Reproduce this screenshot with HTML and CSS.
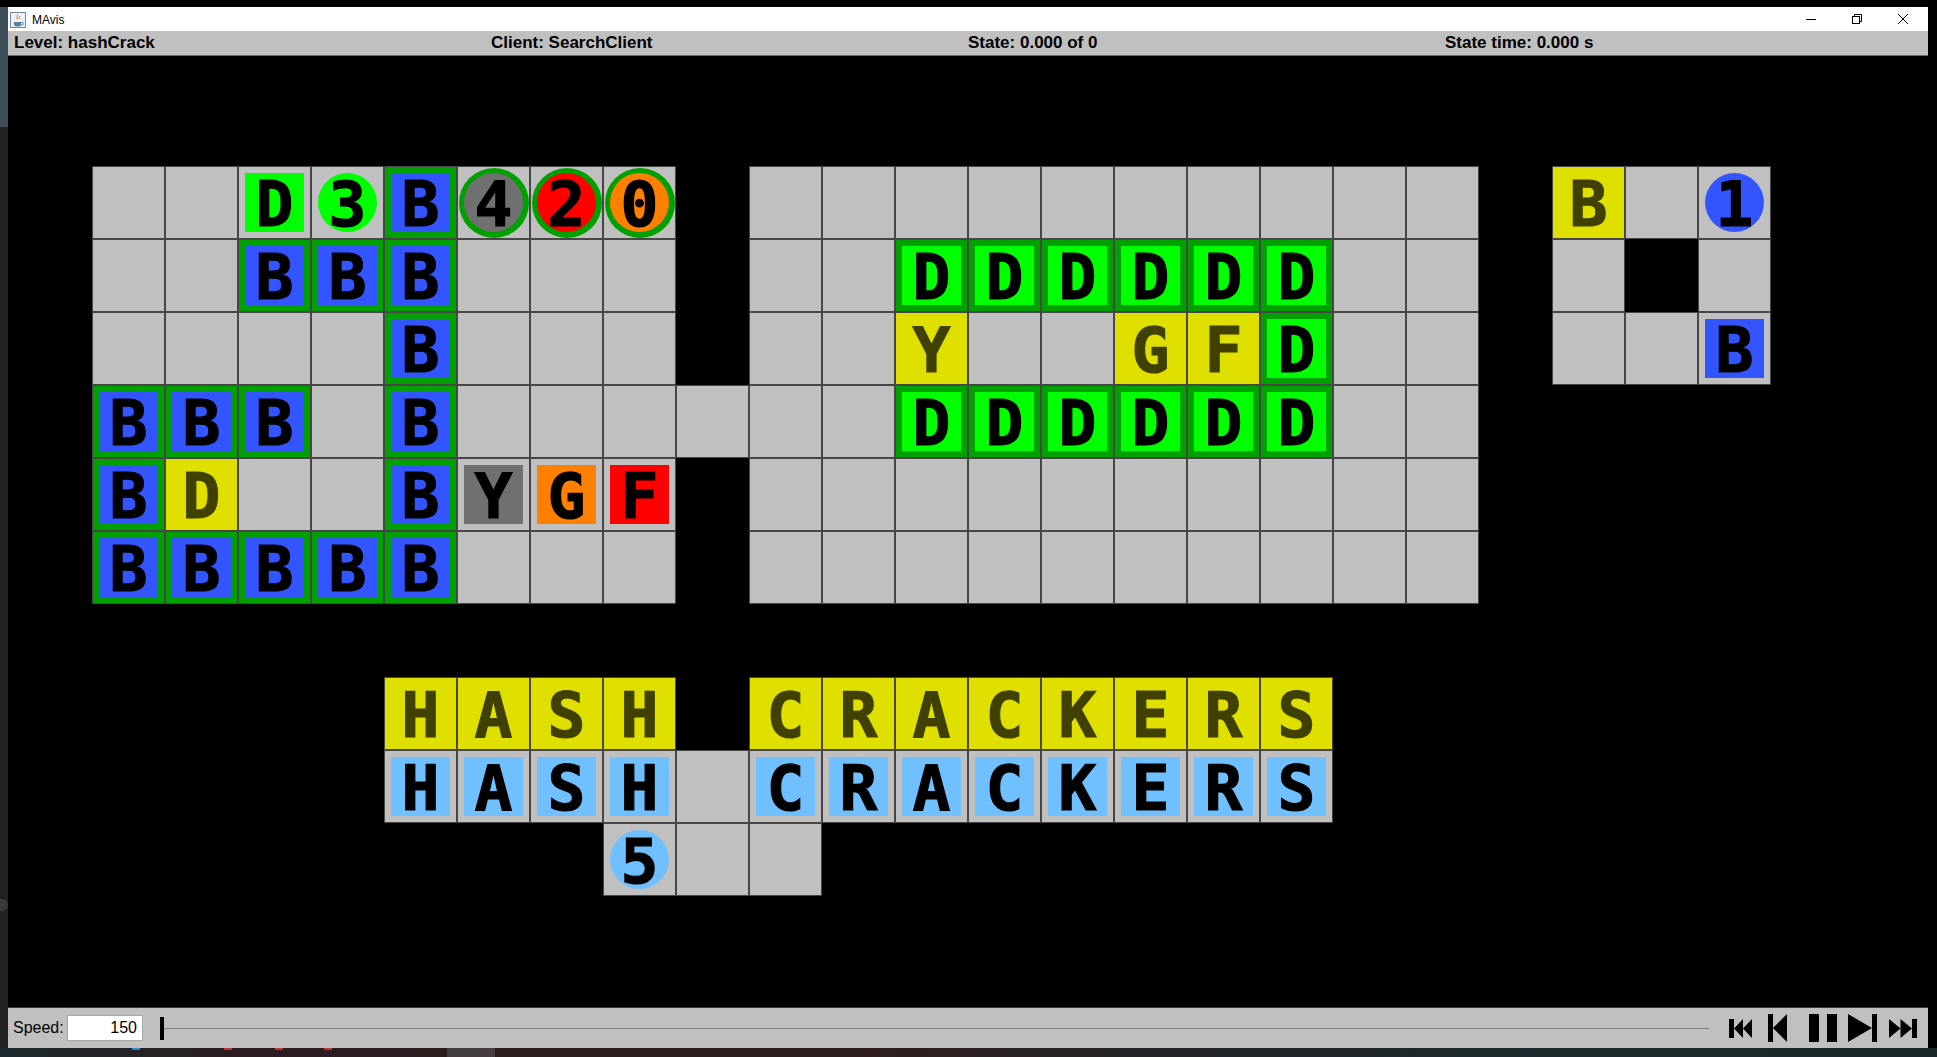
FILE: index.html
```html
<!DOCTYPE html>
<html>
<head>
<meta charset="utf-8">
<title>MAvis</title>
<link rel="stylesheet" href="styles.css">
</head>
<body>
<div class="top-gap"></div>
<div class="middle">
  <div class="desk-left"><span class="desk-dot"></span></div>
  <div class="window">
    <div class="titlebar">
      <svg class="app-icon" width="16" height="16" viewBox="0 0 16 16"><rect x="0.5" y="0.5" width="15" height="15" fill="#eef2f7" stroke="#6d8aa8"/><path d="M4 10h7v2a2.5 2.5 0 0 1-2.5 2.5h-2A2.5 2.5 0 0 1 4 12z" fill="#5382a1"/><path d="M11 10.5h1.2a1.2 1.2 0 0 1 0 2.4H11" fill="none" stroke="#5382a1"/><path d="M7 2.5c1.6 1.6-1.2 2.6.4 4.8M9.2 3.8c1 1-.6 2 .4 3.2" fill="none" stroke="#e76f00"/></svg>
      <span class="app-title">MAvis</span>
      <div class="win-btns">
        <span class="win-btn"><svg width="10" height="10" viewBox="0 0 10 10"><path d="M0 5.5h10" stroke="#000"/></svg></span>
        <span class="win-btn"><svg width="10" height="10" viewBox="0 0 10 10"><rect x="0.5" y="2.5" width="7" height="7" fill="none" stroke="#000"/><path d="M2.5 2.5V0.5h7v7h-2" fill="none" stroke="#000"/></svg></span>
        <span class="win-btn"><svg width="10" height="10" viewBox="0 0 10 10"><path d="M0 0L10 10M10 0L0 10" stroke="#000"/></svg></span>
      </div>
    </div>
    <div class="status">
      <span>Level: hashCrack</span>
      <span>Client: SearchClient</span>
      <span>State: 0.000 of 0</span>
      <span>State time: 0.000 s</span>
    </div>
    <div class="canvas">
      <div class="board">
        <!-- row 0 -->
        <div class="c"></div><div class="c"></div>
        <div class="c"><b class="box lime">D</b></div>
        <div class="c"><b class="agent lime">3</b></div>
        <div class="c ok"><b class="box blue">B</b></div>
        <div class="c"><span class="ring"><b class="agent grey">4</b></span></div>
        <div class="c"><span class="ring"><b class="agent red">2</b></span></div>
        <div class="c"><span class="ring"><b class="agent orange">0</b></span></div>
        <div class="w"></div>
        <div class="c"></div><div class="c"></div><div class="c"></div><div class="c"></div><div class="c"></div>
        <div class="c"></div><div class="c"></div><div class="c"></div><div class="c"></div><div class="c"></div>
        <div class="w"></div>
        <div class="c goal">B</div>
        <div class="c"></div>
        <div class="c"><b class="agent blue">1</b></div>
        <!-- row 1 -->
        <div class="c"></div><div class="c"></div>
        <div class="c ok"><b class="box blue">B</b></div>
        <div class="c ok"><b class="box blue">B</b></div>
        <div class="c ok"><b class="box blue">B</b></div>
        <div class="c"></div><div class="c"></div><div class="c"></div>
        <div class="w"></div>
        <div class="c"></div><div class="c"></div>
        <div class="c ok"><b class="box lime">D</b></div>
        <div class="c ok"><b class="box lime">D</b></div>
        <div class="c ok"><b class="box lime">D</b></div>
        <div class="c ok"><b class="box lime">D</b></div>
        <div class="c ok"><b class="box lime">D</b></div>
        <div class="c ok"><b class="box lime">D</b></div>
        <div class="c"></div><div class="c"></div>
        <div class="w"></div>
        <div class="c"></div><div class="w"></div><div class="c"></div>
        <!-- row 2 -->
        <div class="c"></div><div class="c"></div><div class="c"></div><div class="c"></div>
        <div class="c ok"><b class="box blue">B</b></div>
        <div class="c"></div><div class="c"></div><div class="c"></div>
        <div class="w"></div>
        <div class="c"></div><div class="c"></div>
        <div class="c goal">Y</div>
        <div class="c"></div><div class="c"></div>
        <div class="c goal">G</div>
        <div class="c goal">F</div>
        <div class="c ok"><b class="box lime">D</b></div>
        <div class="c"></div><div class="c"></div>
        <div class="w"></div>
        <div class="c"></div><div class="c"></div>
        <div class="c"><b class="box blue">B</b></div>
        <!-- row 3 -->
        <div class="c ok"><b class="box blue">B</b></div>
        <div class="c ok"><b class="box blue">B</b></div>
        <div class="c ok"><b class="box blue">B</b></div>
        <div class="c"></div>
        <div class="c ok"><b class="box blue">B</b></div>
        <div class="c"></div><div class="c"></div><div class="c"></div>
        <div class="c"></div>
        <div class="c"></div><div class="c"></div>
        <div class="c ok"><b class="box lime">D</b></div>
        <div class="c ok"><b class="box lime">D</b></div>
        <div class="c ok"><b class="box lime">D</b></div>
        <div class="c ok"><b class="box lime">D</b></div>
        <div class="c ok"><b class="box lime">D</b></div>
        <div class="c ok"><b class="box lime">D</b></div>
        <div class="c"></div><div class="c"></div>
        <div class="w"></div><div class="w"></div><div class="w"></div><div class="w"></div>
        <!-- row 4 -->
        <div class="c ok"><b class="box blue">B</b></div>
        <div class="c goal">D</div>
        <div class="c"></div><div class="c"></div>
        <div class="c ok"><b class="box blue">B</b></div>
        <div class="c"><b class="box grey">Y</b></div>
        <div class="c"><b class="box orange">G</b></div>
        <div class="c"><b class="box red">F</b></div>
        <div class="w"></div>
        <div class="c"></div><div class="c"></div><div class="c"></div><div class="c"></div><div class="c"></div>
        <div class="c"></div><div class="c"></div><div class="c"></div><div class="c"></div><div class="c"></div>
        <div class="w"></div><div class="w"></div><div class="w"></div><div class="w"></div>
        <!-- row 5 -->
        <div class="c ok"><b class="box blue">B</b></div>
        <div class="c ok"><b class="box blue">B</b></div>
        <div class="c ok"><b class="box blue">B</b></div>
        <div class="c ok"><b class="box blue">B</b></div>
        <div class="c ok"><b class="box blue">B</b></div>
        <div class="c"></div><div class="c"></div><div class="c"></div>
        <div class="w"></div>
        <div class="c"></div><div class="c"></div><div class="c"></div><div class="c"></div><div class="c"></div>
        <div class="c"></div><div class="c"></div><div class="c"></div><div class="c"></div><div class="c"></div>
        <div class="w"></div><div class="w"></div><div class="w"></div><div class="w"></div>
        <!-- row 6 -->
        <div class="w"></div><div class="w"></div><div class="w"></div><div class="w"></div><div class="w"></div>
        <div class="w"></div><div class="w"></div><div class="w"></div><div class="w"></div><div class="w"></div>
        <div class="w"></div><div class="w"></div><div class="w"></div><div class="w"></div><div class="w"></div>
        <div class="w"></div><div class="w"></div><div class="w"></div><div class="w"></div><div class="w"></div>
        <div class="w"></div><div class="w"></div><div class="w"></div>
        <!-- row 7 -->
        <div class="w"></div><div class="w"></div><div class="w"></div><div class="w"></div>
        <div class="c goal">H</div><div class="c goal">A</div><div class="c goal">S</div><div class="c goal">H</div>
        <div class="w"></div>
        <div class="c goal">C</div><div class="c goal">R</div><div class="c goal">A</div><div class="c goal">C</div>
        <div class="c goal">K</div><div class="c goal">E</div><div class="c goal">R</div><div class="c goal">S</div>
        <div class="w"></div><div class="w"></div><div class="w"></div><div class="w"></div><div class="w"></div><div class="w"></div>
        <!-- row 8 -->
        <div class="w"></div><div class="w"></div><div class="w"></div><div class="w"></div>
        <div class="c"><b class="box sky">H</b></div>
        <div class="c"><b class="box sky">A</b></div>
        <div class="c"><b class="box sky">S</b></div>
        <div class="c"><b class="box sky">H</b></div>
        <div class="c"></div>
        <div class="c"><b class="box sky">C</b></div>
        <div class="c"><b class="box sky">R</b></div>
        <div class="c"><b class="box sky">A</b></div>
        <div class="c"><b class="box sky">C</b></div>
        <div class="c"><b class="box sky">K</b></div>
        <div class="c"><b class="box sky">E</b></div>
        <div class="c"><b class="box sky">R</b></div>
        <div class="c"><b class="box sky">S</b></div>
        <div class="w"></div><div class="w"></div><div class="w"></div><div class="w"></div><div class="w"></div><div class="w"></div>
        <!-- row 9 -->
        <div class="w"></div><div class="w"></div><div class="w"></div><div class="w"></div><div class="w"></div>
        <div class="w"></div><div class="w"></div>
        <div class="c"><b class="agent sky">5</b></div>
        <div class="c"></div><div class="c"></div>
      </div>
    </div>
    <div class="controls">
      <span class="speed-label">Speed:</span>
      <span class="speed-input">150</span>
      <div class="slider"><span class="thumb"></span><span class="track"></span></div>
      <div class="player">
        <svg class="pb pb1" width="23" height="19" viewBox="0 0 23 19"><rect x="0" y="0" width="5" height="19"/><path d="M5 9.5L14 0V19zM14 9.5L23 0V19z"/></svg>
        <svg class="pb pb2" width="19" height="28" viewBox="0 0 19 28"><rect x="0" y="0" width="5" height="28"/><path d="M5 14L19 0V28z"/></svg>
        <svg class="pb pb3" width="28" height="28" viewBox="0 0 28 28"><rect x="0" y="0" width="10" height="28"/><rect x="18" y="0" width="10" height="28"/></svg>
        <svg class="pb pb4" width="29" height="28" viewBox="0 0 29 28"><path d="M0 0L24 14L0 28z"/><rect x="24" y="0" width="5" height="28"/></svg>
        <svg class="pb pb5" width="28" height="19" viewBox="0 0 28 19"><path d="M0 0L11.5 9.5L0 19zM11.5 0L23 9.5L11.5 19z"/><rect x="23" y="0" width="5" height="19"/></svg>
      </div>
    </div>
  </div>
  <div class="desk-right"></div>
</div>
<div class="taskbar">
  <span class="tb-mark tb-blue"></span>
  <span class="tb-mark tb-red"></span>
  <span class="tb-mark tb-red2"></span>
  <span class="tb-mark tb-red3"></span>
  <span class="tb-active"></span>
</div>
</body>
</html>
```

FILE: styles.css
```css
* { box-sizing: border-box; margin: 0; padding: 0; }
html, body { background: #000; }
body {
  width: 1937px;
  height: 1057px;
  overflow: hidden;
  display: flex;
  flex-direction: column;
  font-family: "Liberation Sans", Arial, sans-serif;
  color: #000;
}
.top-gap { height: 7px; flex: none; background: #000; }
.middle { display: flex; height: 1041px; flex: none; }
.desk-left {
  width: 8px;
  flex: none;
  display: flex;
  flex-direction: column;
  background: linear-gradient(#3d4c57 0, #3d4c57 120px, #222 120px, #222 100%);
}
.desk-dot {
  width: 12px;
  height: 12px;
  margin-top: 892px;
  margin-left: -4px;
  border-radius: 50%;
  background: #3a3a3a;
}
.desk-right { width: 9px; flex: none; background: #000; }
.window { width: 1920px; flex: none; display: flex; flex-direction: column; }

.titlebar {
  height: 24px;
  flex: none;
  background: #fff;
  display: flex;
  align-items: center;
}
.app-icon { margin-left: 2px; margin-top: 1px; }
.app-title { margin-left: 6px; font-size: 12px; margin-top: 1px; }
.win-btns { margin-left: auto; margin-right: 2px; display: flex; }
.win-btn { width: 46px; height: 24px; display: flex; align-items: center; justify-content: center; }

.status {
  height: 25px;
  flex: none;
  background: #c0c0c0;
  border-bottom: 1px solid #6a6a6a;
  display: grid;
  grid-template-columns: repeat(4, 477px);
  align-items: center;
  padding-left: 6px;
  font-weight: bold;
  font-size: 17px;
}

.canvas { flex: 1; background: #000; padding: 110px 0 0 84px; }
.board {
  display: grid;
  grid-template-columns: repeat(23, 73px);
  grid-auto-rows: 73px;
  font: bold 63px "DejaVu Sans Mono", monospace;
  -webkit-text-stroke: 1.2px currentColor;
}
.c {
  background: #c0c0c0;
  border: 1px solid #464646;
  display: flex;
  align-items: center;
  justify-content: center;
}
.ok { background: #00a000; }
.goal { background: #e0e000; color: #404000; padding-top: 3px; }
.box, .agent {
  width: 59px;
  height: 59px;
  display: flex;
  align-items: center;
  justify-content: center;
  padding-top: 3px;
  color: #000;
  font-weight: bold;
}
.agent { border-radius: 50%; }
.ring {
  width: 70px;
  height: 70px;
  border-radius: 50%;
  background: #00a000;
  display: flex;
  align-items: center;
  justify-content: center;
}
.blue { background: #3355ff; }
.lime { background: #00ff00; }
.grey { background: #707070; }
.red { background: #ff0000; }
.orange { background: #ff8000; }
.sky { background: #70c0ff; }

.controls {
  height: 41px;
  flex: none;
  background: #c0c0c0;
  border-top: 1px solid #3a3a3a;
  display: flex;
  align-items: center;
  padding: 0 11px 0 5px;
  font-size: 16px;
}
.speed-label { width: 54px; flex: none; }
.speed-input {
  width: 76px;
  height: 26px;
  flex: none;
  background: #fff;
  border: 1px solid #a8a8a8;
  text-align: right;
  padding-right: 5px;
  line-height: 24px;
}
.slider { flex: 1; margin-left: 17px; display: flex; align-items: center; height: 23px; }
.thumb { width: 4px; height: 23px; background: #000; flex: none; }
.track { flex: 1; height: 1px; background: #808080; }
.player { display: flex; align-items: center; margin-left: 20px; }
.pb { fill: #000; flex: none; }
.pb2 { margin-left: 16px; }
.pb3 { margin-left: 22px; }
.pb4 { margin-left: 11px; }
.pb5 { margin-left: 12px; }

.taskbar {
  height: 9px;
  flex: none;
  display: flex;
  background: linear-gradient(90deg, #1d2a2f 0, #2a1d20 12%, #2e1d1c 45%, #22242a 62%, #1c2a2e 80%, #1b292c 100%);
}
.tb-mark { height: 2px; width: 8px; flex: none; }
.tb-blue { margin-left: 132px; background: #2a8ad8; }
.tb-red { margin-left: 84px; background: #c83030; }
.tb-red2 { margin-left: 43px; background: #c83030; }
.tb-red3 { margin-left: 41px; background: #c83030; }
.tb-active { margin-left: 115px; width: 48px; background: #463d3e; flex: none; }
```
